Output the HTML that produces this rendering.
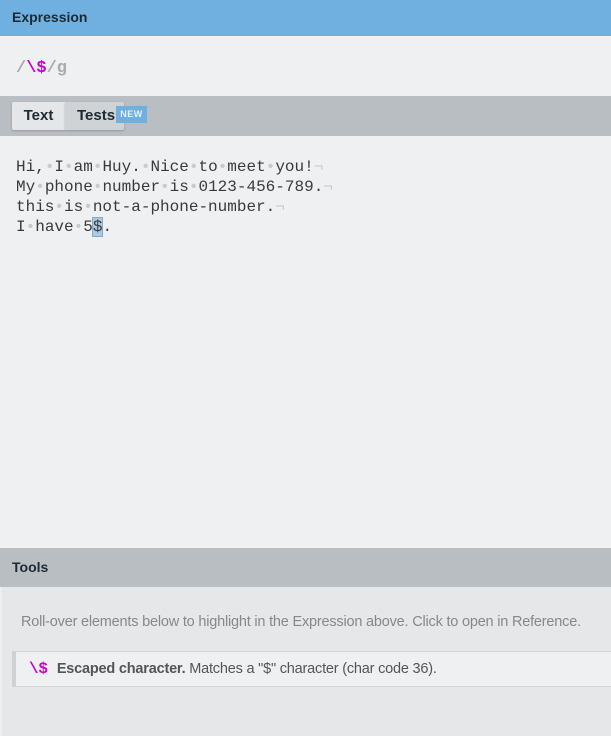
<!DOCTYPE html>
<html><head><meta charset="utf-8"><style>
*{margin:0;padding:0;box-sizing:border-box}
body{width:611px;height:736px;overflow:hidden;background:#eff0f2;font-family:"Liberation Sans",sans-serif;position:relative}
.hdr{position:absolute;left:0;width:611px;font-weight:bold;font-size:14px;color:#1e2a33;padding-left:12px}
#h1{top:0;height:36px;line-height:34px;background:#6fb0e0}
#expr{position:absolute;top:36px;height:60px;width:611px;background:#eff0f2}
#expr span{position:absolute;left:16px;top:23px;font-family:"Liberation Mono",monospace;font-size:17px;font-weight:bold;color:#aaa}
#tabs{position:absolute;top:96px;height:40px;width:611px;background:#b9bec2}
.tab{position:absolute;top:6px;height:28px;line-height:28px;font-weight:bold;font-size:15px;color:#1e2a33;text-align:center;box-shadow:0 1px 2px rgba(0,0,0,.2)}
#t1{left:12px;width:53px;background:#e5e6e8;border-radius:2px 0 0 2px}
#t2{left:65px;width:59px;background:#cfd3d6;border-radius:0 2px 2px 0;text-align:left;padding-left:12px}
#new{position:absolute;left:116px;top:106px;width:31px;height:17px;background:#6fb0e0;color:#e8f2fa;font-size:9px;font-weight:bold;line-height:17px;text-align:center;letter-spacing:.5px}
#txt{position:absolute;top:136px;height:412px;width:611px;background:#eff0f2;padding:21px 16px;font-family:"Liberation Mono",monospace;font-size:16px;line-height:20px;color:#3a3a3a;white-space:pre}
.d{color:#c8cacd}
.m{background:#a9c9e6;outline:1px solid #8ab}
#h2{top:548px;height:39px;line-height:38px;background:#b9bec2}
#tools{position:absolute;top:587px;height:149px;width:611px;background:#e6e7e9;border-left:2px solid #eceef0}
#roll{position:absolute;left:19px;top:27px;font-size:14.5px;color:#888;letter-spacing:-.2px}
#item{position:absolute;left:10px;top:64px;width:601px;height:36px;background:#eff0f2;border:1px solid #d4d5d7;border-left:4px solid #d0d1d4;border-right:none;line-height:34px;font-size:14.5px;color:#555;padding-left:13px;letter-spacing:-.2px}
#item b.c{color:#c0c;font-family:"Liberation Mono",monospace;font-size:16px;margin-right:9px}
</style></head><body>
<div class="hdr" id="h1">Expression</div>
<div id="expr"><span>/<b style="color:#c0c">\$</b>/g</span></div>
<div id="tabs"><div class="tab" id="t1">Text</div><div class="tab" id="t2">Tests</div></div>
<div id="new">NEW</div>
<div id="txt">Hi,<span class="d">•</span>I<span class="d">•</span>am<span class="d">•</span>Huy.<span class="d">•</span>Nice<span class="d">•</span>to<span class="d">•</span>meet<span class="d">•</span>you!<span class="d">¬</span>
My<span class="d">•</span>phone<span class="d">•</span>number<span class="d">•</span>is<span class="d">•</span>0123-456-789.<span class="d">¬</span>
this<span class="d">•</span>is<span class="d">•</span>not-a-phone-number.<span class="d">¬</span>
I<span class="d">•</span>have<span class="d">•</span>5<span class="m">$</span>.</div>
<div class="hdr" id="h2">Tools</div>
<div id="tools">
<div id="roll">Roll-over elements below to highlight in the Expression above. Click to open in Reference.</div>
<div id="item"><b class="c">\$</b><b>Escaped character.</b> Matches a "$" character (char code 36).</div>
</div>
</body></html>
